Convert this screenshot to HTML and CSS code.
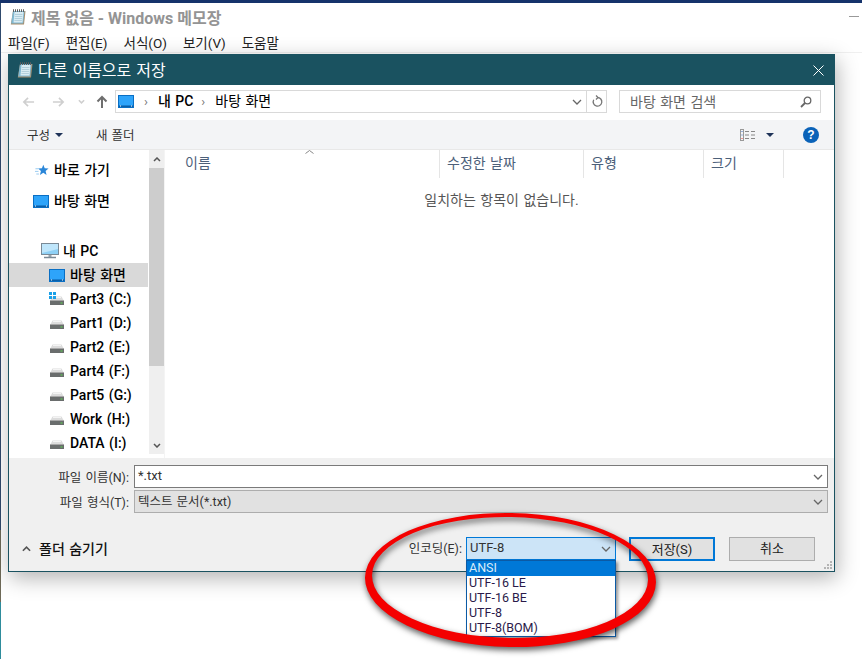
FILE: index.html
```html
<!DOCTYPE html>
<html lang="ko">
<head>
  <meta charset="UTF-8" />
  <title>제목 없음 - Windows 메모장</title>
  <link rel="stylesheet" href="styles.css">
</head>
<body>
  <svg class="defs" width="0" height="0">
    <symbol id="ic-notepad" viewBox="0 0 16 16">
      <path d="M3 2h12.500l-1.500 13.500H.800z" fill="#a98d6a"/>
      <path d="M3 2h11.500l-1.300 12.500H1.200z" fill="#7fb8d2"/>
      <path d="M4.500 3h9l-1 10.500H3.500z" fill="#d9ecf3"/>
      <path d="M3 1.600h12" stroke="#5f5f5f" stroke-width="2.800" stroke-dasharray="1 1"/>
      <path d="M5 5.500h7.500M4.800 7.500h7.500M4.600 9.500h7.500M4.400 11.500h7.500" stroke="#a9c9d6" stroke-width=".8"/>
    </symbol>
    <symbol id="ic-desktop" viewBox="0 0 16 13">
      <rect x=".5" y=".5" width="15" height="12" fill="#1e9bf5" stroke="#0a6fc4"/>
      <path d="M1 1h14v9.500H1z" fill="#2ea4fa"/>
      <path d="M1 10.500h14V12H1z" fill="#0b5fa8"/>
      <path d="M2 11h1M13 11h1" stroke="#fff"/>
    </symbol>
    <symbol id="ic-pc" viewBox="0 0 18 16">
      <rect x=".5" y=".5" width="17" height="11" fill="#8ed0f5" stroke="#7a8a96"/>
      <path d="M1 1h16v5L1 10z" fill="#bfe6fb"/>
      <path d="M7.500 12h3v2h-3z" fill="#9aa5ad"/>
      <path d="M3 14.500h12" stroke="#7a8a96" stroke-width="1.500"/>
    </symbol>
    <symbol id="ic-drive" viewBox="0 0 14 9">
      <path d="M2.500.500h9L14 5H0z" fill="#dcdcdc"/>
      <path d="M3 1.500h8" stroke="#f4f4f4"/>
      <path d="M0 4.500h14V9H0z" fill="#6a6d6d"/>
      <path d="M0 4.500h14" stroke="#a8a8a8"/>
      <path d="M10.500 6.500h2v1h-2z" fill="#59d94c"/>
    </symbol>
    <symbol id="ic-star" viewBox="0 0 16 14">
      <path d="M9.500 .5l1.600 3.900 4.400.3-3.400 2.800 1.100 4.500-3.700-2.500-3.900 2.500 1.200-4.500L3.600 4.700l4.300-.3z" fill="#2a86d8"/>
      <path d="M.5 5h3.500M0 8h4M1.500 11h3" stroke="#8cc4ee"/>
    </symbol>
  </svg>

  <header class="notepad">
    <div class="np-title">
      <svg class="ic16"><use href="#ic-notepad"/></svg>
      <span>제목 없음 - Windows 메모장</span>
      <i class="np-min"></i>
    </div>
    <nav class="np-menu">
      <span>파일(F)</span><span>편집(E)</span><span>서식(O)</span><span>보기(V)</span><span>도움말</span>
    </nav>
  </header>

  <section class="dialog">
    <div class="dlg-title">
      <svg class="ic16"><use href="#ic-notepad"/></svg>
      <span>다른 이름으로 저장</span>
      <svg class="dlg-close" viewBox="0 0 11 11"><path d="M.5 .5l10 10M10.500 .5l-10 10" stroke="#fff" fill="none"/></svg>
    </div>

    <div class="addr-row">
      <div class="arrows">
        <svg class="arr-back" viewBox="0 0 14 12"><path d="M13 6H2M6.500 1.500L2 6l4.500 4.500" class="arrow-off"/></svg>
        <svg class="arr-next" viewBox="0 0 14 12"><path d="M1 6h11M7.500 1.500L12 6l-4.500 4.500" class="arrow-off"/></svg>
        <svg class="arr-small" viewBox="0 0 8 5"><path d="M1 1l3 3 3-3" class="arrow-off"/></svg>
        <svg class="arr-up" viewBox="0 0 12 14"><path d="M6 13V2M1.500 6.500L6 2l4.500 4.500" class="arrow-on"/></svg>
      </div>
      <div class="addr-box">
        <svg class="addr-ic"><use href="#ic-desktop"/></svg>
        <span class="crumb-sep">›</span><span class="crumb crumb-b">내 PC</span>
        <span class="crumb-sep crumb-sep2">›</span><span class="crumb">바탕 화면</span>
        <span class="grow"></span>
        <svg class="chev" viewBox="0 0 10 6"><path d="M1 1l4 4 4-4"/></svg>
        <span class="refresh">
          <svg viewBox="0 0 12 13"><path d="M6.500 2.500a4.300 4.300 0 1 1-3.800 2.300M5 .5l2 2-2 2" fill="none" stroke="#777" stroke-width="1.300"/></svg>
        </span>
      </div>
      <div class="search-box">
        <span>바탕 화면 검색</span>
        <svg viewBox="0 0 12 12"><circle cx="7.500" cy="4.500" r="3.300" fill="none" stroke="#666" stroke-width="1.300"/><path d="M5 7l-4 4" stroke="#666" stroke-width="1.800"/></svg>
      </div>
    </div>

    <div class="toolbar">
      <span class="tool tool-org">구성 <i class="caret"></i></span>
      <span class="tool">새 폴더</span>
      <span class="grow"></span>
      <svg class="view-ic" viewBox="0 0 16 12">
        <rect x=".5" y=".5" width="3" height="11" fill="#f3f4f6" stroke="#999"/>
        <path d="M1.500 2.500h1M1.500 6h1" stroke="#3b6cc0"/><path d="M1.500 9.500h1" stroke="#d33"/>
        <path d="M5 2.500h4M11 2.500h4M5 6h4M11 6h4M5 9.500h4M11 9.500h4" stroke="#888"/>
      </svg>
      <i class="caret view-caret"></i>
      <span class="help">?</span>
    </div>

    <div class="browser">
      <aside class="side">
        <ul class="tree">
          <li class="quick"><svg class="ic-star"><use href="#ic-star"/></svg><span class="ko">바로 가기</span></li>
          <li class="quick-sub"><svg class="ic-desk"><use href="#ic-desktop"/></svg><span class="ko">바탕 화면</span></li>
          <li class="pc"><svg class="ic-pc"><use href="#ic-pc"/></svg><span class="ko">내 PC</span></li>
          <li class="node on"><svg class="ic-desk"><use href="#ic-desktop"/></svg><span class="ko">바탕 화면</span></li>
          <li class="node"><span class="drive-c"><svg class="ic-win" viewBox="0 0 7 7"><path d="M0 0h3v3H0zM4 0h3v3H4zM0 4h3v3H0zM4 4h3v3H4z" fill="#19a0e8"/></svg><svg class="ic-drive"><use href="#ic-drive"/></svg></span>Part3 (C:)</li>
          <li class="node"><svg class="ic-drive"><use href="#ic-drive"/></svg>Part1 (D:)</li>
          <li class="node"><svg class="ic-drive"><use href="#ic-drive"/></svg>Part2 (E:)</li>
          <li class="node"><svg class="ic-drive"><use href="#ic-drive"/></svg>Part4 (F:)</li>
          <li class="node"><svg class="ic-drive"><use href="#ic-drive"/></svg>Part5 (G:)</li>
          <li class="node"><svg class="ic-drive"><use href="#ic-drive"/></svg>Work (H:)</li>
          <li class="node"><svg class="ic-drive"><use href="#ic-drive"/></svg>DATA (I:)</li>
        </ul>
      </aside>
      <div class="scroll">
        <svg class="sb-arrow" viewBox="0 0 8 5"><path d="M1 4l3-3 3 3"/></svg>
        <div class="sb-thumb"></div>
        <svg class="sb-arrow sb-down" viewBox="0 0 8 5"><path d="M1 1l3 3 3-3"/></svg>
      </div>
      <div class="files">
        <div class="cols">
          <span class="col col-name">이름<svg class="sort" viewBox="0 0 9 4"><path d="M.5 3.500L4.500 .5l4 3"/></svg></span>
          <span class="col col-date">수정한 날짜</span>
          <span class="col col-type">유형</span>
          <span class="col col-size">크기</span>
        </div>
        <p class="empty">일치하는 항목이 없습니다.</p>
      </div>
    </div>

    <div class="form">
      <div class="field">
        <label>파일 이름(N):</label>
        <div class="combo"><span class="combo-text">*.txt</span><svg class="chev" viewBox="0 0 10 6"><path d="M1 1l4 4 4-4"/></svg></div>
      </div>
      <div class="field">
        <label>파일 형식(T):</label>
        <div class="combo combo-off"><span class="combo-text">텍스트 문서(*.txt)</span><svg class="chev" viewBox="0 0 10 6"><path d="M1 1l4 4 4-4"/></svg></div>
      </div>
      <div class="actions">
        <span class="hide-folders"><svg viewBox="0 0 10 6"><path d="M1 5l4-4 4 4"/></svg><span class="ko">폴더 숨기기</span></span>
        <span class="grow"></span>
        <label class="enc-label">인코딩(E):</label>
        <div class="enc">
          <div class="enc-select"><span class="combo-text">UTF-8</span><svg class="chev" viewBox="0 0 10 6"><path d="M1 1l4 4 4-4"/></svg></div>
          <ul class="enc-list">
            <li class="on">ANSI</li>
            <li>UTF-16 LE</li>
            <li>UTF-16 BE</li>
            <li>UTF-8</li>
            <li>UTF-8(BOM)</li>
          </ul>
        </div>
        <button class="btn btn-main">저장(S)</button>
        <button class="btn">취소</button>
      </div>
      <svg class="grip" viewBox="0 0 10 10"><path d="M7 1h2v2H7zM4 4h2v2H4zM7 4h2v2H7zM1 7h2v2H1zM4 7h2v2H4zM7 7h2v2H7z" fill="#b4b4b4"/></svg>
    </div>
  </section>

  <svg class="mark" viewBox="0 0 862 659">
    <path fill="#f40000" fill-rule="evenodd" transform="rotate(1 510 579)"
      d="M365 580a145.500 67 0 1 0 291 0a145.500 67 0 1 0-291 0z M372 577.500a138 60.500 0 1 0 276 0a138 60.500 0 1 0-276 0z"/>
  </svg>
</body>
</html>
```

FILE: styles.css
```css
* {
  box-sizing: border-box;
}

html, body {
  margin: 0;
  height: 100%;
}

body {
  width: 862px;
  height: 659px;
  overflow: hidden;
  position: relative;
  padding-left: 1px;
  background: linear-gradient(#2f4a6d 530px, #6e6a58 530px, #6e6a58 602px, #2e8c9c 602px) left top / 1px 100% no-repeat, #fff;
  border-top: 3px solid #16336b;
  font-family: Roboto, "Noto Sans CJK KR", sans-serif;
  font-size: 13px;
  color: #000;
}

ul {
  list-style: none;
  margin: 0;
  padding: 0;
}

svg {
  display: block;
  flex: none;
}

.defs {
  position: absolute;
}

.grow {
  flex: 1;
}

.ic16 {
  width: 16px;
  height: 16px;
}

.ko {
  margin-top: -2px;
}

/* notepad behind the dialog */
.notepad {
  height: 50px;
  border-bottom: 1px solid #f0f0f0;
}

.np-title {
  display: flex;
  align-items: center;
  gap: 5px;
  height: 27px;
  padding: 0 3px 0 9px;
  font-size: 16px;
  font-weight: 700;
  color: #949494;
}

.np-min {
  width: 10px;
  height: 1px;
  margin-left: auto;
  background: #999;
}

.np-menu {
  display: flex;
  gap: 16px;
  padding-left: 7px;
  font-size: 13.500px;
  line-height: 26px;
  color: #222;
}

/* save dialog */
.dialog {
  position: absolute;
  left: 8px;
  top: 51px;
  width: 827px;
  height: 518px;
  display: flex;
  flex-direction: column;
  background: #fff;
  border: 1px solid #1a5260;
  box-shadow: 2px 6px 20px rgba(0, 0, 0, 0.3);
}

.dlg-title {
  display: flex;
  align-items: center;
  gap: 5px;
  height: 30px;
  flex: none;
  padding-left: 8px;
  background: #1a5260;
  color: #fff;
  font-size: 16px;
  word-spacing: 1px;
}

.dlg-title span {
  margin-top: -3px;
}

.dlg-close {
  width: 11px;
  height: 11px;
  margin-left: auto;
  margin-right: 10px;
}

.addr-row {
  display: flex;
  align-items: flex-start;
  height: 35px;
  flex: none;
  padding-top: 5px;
}

.arrows {
  display: flex;
  align-items: center;
  width: 106px;
  height: 23px;
  padding-left: 13px;
}

.arr-back, .arr-next {
  width: 13px;
  height: 12px;
}

.arr-next {
  margin-left: 17px;
}

.arr-small {
  width: 7px;
  height: 5px;
  margin-left: 13px;
}

.arr-up {
  width: 12px;
  height: 14px;
  margin-left: 11px;
}

.arrow-off {
  fill: none;
  stroke: #cfcfcf;
  stroke-width: 1.800;
}

.arrow-on {
  fill: none;
  stroke: #6e6e6e;
  stroke-width: 2;
}

.addr-box {
  display: flex;
  align-items: center;
  width: 492px;
  height: 23px;
  border: 1px solid #d9d9d9;
  margin-right: 12px;
  font-size: 14px;
}

.addr-ic {
  width: 16px;
  height: 13px;
  margin-left: 2px;
}

.crumb-sep {
  margin: 0 10px;
  color: #777;
  font-size: 13px;
}

.crumb-sep2 {
  margin-left: 8px;
}

.crumb {
  margin-top: -3px;
  word-spacing: 1px;
}

.crumb-b {
  font-weight: 500;
}

.chev {
  width: 10px;
  height: 6px;
  fill: none;
  stroke: #666;
  stroke-width: 1.300;
}

.addr-box .chev {
  margin-right: 4px;
}

.refresh {
  display: flex;
  align-items: center;
  justify-content: center;
  width: 20px;
  height: 100%;
  border-left: 1px solid #d9d9d9;
}

.refresh svg {
  width: 12px;
  height: 13px;
}

.search-box {
  display: flex;
  align-items: center;
  justify-content: space-between;
  width: 202px;
  height: 23px;
  padding: 0 8px 0 10px;
  border: 1px solid #d9d9d9;
  color: #666;
  font-size: 14px;
  word-spacing: 1px;
}

.search-box span {
  margin-top: -2px;
}

.search-box svg {
  width: 12px;
  height: 12px;
}

.toolbar {
  display: flex;
  align-items: center;
  height: 30px;
  flex: none;
  padding: 0 15px 0 18px;
  background: #f3f4f6;
  border-bottom: 1px solid #e8e8e8;
  color: #333;
  font-size: 12.500px;
}

.tool {
  display: flex;
  align-items: center;
  gap: 5px;
  word-spacing: 1px;
}

.tool-org {
  width: 69px;
}

.caret {
  width: 0;
  height: 0;
  border: 4px solid transparent;
  border-top: 4px solid #1f3358;
  border-bottom: 0;
}

.view-ic {
  width: 16px;
  height: 12px;
  margin-right: 10px;
}

.view-caret {
  margin-right: 29px;
}

.help {
  width: 16px;
  height: 16px;
  border-radius: 50%;
  background: #0a62b8;
  color: #fff;
  font: bold 12px/16px "Liberation Sans", sans-serif;
  text-align: center;
}

.browser {
  display: flex;
  height: 308px;
  flex: none;
}

.side {
  width: 139px;
  height: 304px;
  overflow: hidden;
}

.tree {
  padding-top: 8px;
  font-weight: 500;
  font-size: 14px;
  word-spacing: 1px;
  color: #000;
}

.tree li {
  display: flex;
  align-items: center;
  height: 24px;
}

.quick, .quick-sub {
  padding-left: 26px;
  gap: 5px;
}

.quick-sub {
  margin-top: 7px;
  padding-left: 24px;
}

.pc {
  margin-top: 26px;
  padding-left: 32px;
  gap: 4px;
}

.node {
  padding-left: 40px;
  gap: 5px;
}

.node.on {
  background: #d9d9d9;
}

.ic-star {
  width: 14px;
  height: 13px;
}

.ic-desk {
  width: 16px;
  height: 13px;
}

.ic-pc {
  width: 18px;
  height: 16px;
}

.ic-drive {
  width: 14px;
  height: 9px;
  margin: 3px 1px 0 1px;
}

.drive-c {
  position: relative;
  display: block;
}

.ic-win {
  position: absolute;
  left: 0;
  top: -1px;
  width: 7px;
  height: 7px;
}

.scroll {
  display: flex;
  flex-direction: column;
  align-items: center;
  width: 15px;
  height: 304px;
  margin-left: 1px;
  background: #efefef;
}

.sb-arrow {
  width: 8px;
  height: 5px;
  margin: 7px 0 6px;
  fill: none;
  stroke: #555;
  stroke-width: 1.500;
}

.sb-thumb {
  width: 100%;
  height: 198px;
  background: #cdcdcd;
}

.sb-down {
  margin-top: auto;
}

.files {
  flex: 1;
  border-left: 1px solid #f4f4f4;
}

.cols {
  display: flex;
  height: 28px;
  color: #4c607a;
  font-size: 14px;
  word-spacing: 1px;
}

.col {
  position: relative;
  border-right: 1px solid #e5e5e5;
  line-height: 26px;
  padding-left: 7px;
}

.col-name {
  width: 275px;
  padding-left: 20px;
}

.col-date {
  width: 144px;
}

.col-type {
  width: 120px;
}

.col-size {
  width: 80px;
}

.sort {
  position: absolute;
  left: 140px;
  top: 0;
  width: 9px;
  height: 4px;
  fill: none;
  stroke: #888;
}

.empty {
  margin: 12px 0 0;
  padding-left: 4px;
  text-align: center;
  color: #555;
  font-size: 14px;
  line-height: 20px;
  word-spacing: 1px;
}

.form {
  position: relative;
  flex: 1;
  padding: 6px 6px 0 0;
  background: #f0f0f0;
  color: #333;
}

.field {
  display: flex;
  align-items: center;
  height: 25px;
  font-size: 12.500px;
}

.field label {
  width: 120px;
  text-align: right;
  margin-right: 5px;
  word-spacing: 1px;
}

.combo {
  display: flex;
  align-items: center;
  justify-content: space-between;
  flex: 1;
  height: 23px;
  padding: 0 4px 0 3px;
  background: #fff;
  border: 1px solid #7a7a7a;
  font-size: 13px;
}

.combo-text {
  margin-top: -2px;
}

.combo-off {
  background: #e1e1e1;
  border-color: #adadad;
  font-size: 12.500px;
  word-spacing: 1px;
}

.actions {
  display: flex;
  align-items: flex-start;
  margin-top: 23px;
  padding-left: 13px;
  padding-right: 13px;
}

.hide-folders {
  display: flex;
  align-items: center;
  gap: 8px;
  padding-top: 3px;
  font-weight: 500;
  font-size: 14px;
  color: #111;
  word-spacing: 1px;
}

.hide-folders svg {
  width: 9px;
  height: 6px;
  fill: none;
  stroke: #555;
  stroke-width: 1.800;
}

.enc-label {
  margin-right: 4px;
  line-height: 24px;
  font-size: 12.500px;
}

.enc {
  position: relative;
  width: 150px;
  margin-right: 13px;
}

.enc-select {
  display: flex;
  align-items: center;
  justify-content: space-between;
  height: 23px;
  padding: 0 4px 0 3px;
  background: #cce4f7;
  border: 1px solid #0078d7;
  font-size: 13px;
}

.enc-list {
  position: absolute;
  left: 0;
  top: 23px;
  width: 100%;
  background: #fff;
  border: 1px solid #0b5aa5;
  box-shadow: 2px 2px 3px rgba(0, 0, 0, 0.4);
  font-size: 12.500px;
}

.enc-list li {
  height: 15px;
  line-height: 13px;
  padding-left: 2px;
  color: #2a1a4a;
}

.enc-list li.on {
  background: #0078d7;
  color: #dcecf8;
}

.btn {
  width: 86px;
  height: 24px;
  padding: 0 0 4px;
  margin-right: 14px;
  background: #e1e1e1;
  border: 1px solid #adadad;
  color: #222;
  font: inherit;
  font-size: 13px;
}

.btn:last-child {
  margin-right: 0;
}

.btn-main {
  border: 2px solid #0078d7;
}

.grip {
  position: absolute;
  right: 1px;
  bottom: 1px;
  width: 10px;
  height: 10px;
}

/* red marker drawn on top of the screenshot */
.mark {
  position: absolute;
  left: 0;
  top: -3px;
  width: 862px;
  height: 659px;
  filter: drop-shadow(1px 3px 3px rgba(0, 0, 0, 0.65));
  pointer-events: none;
}
```
